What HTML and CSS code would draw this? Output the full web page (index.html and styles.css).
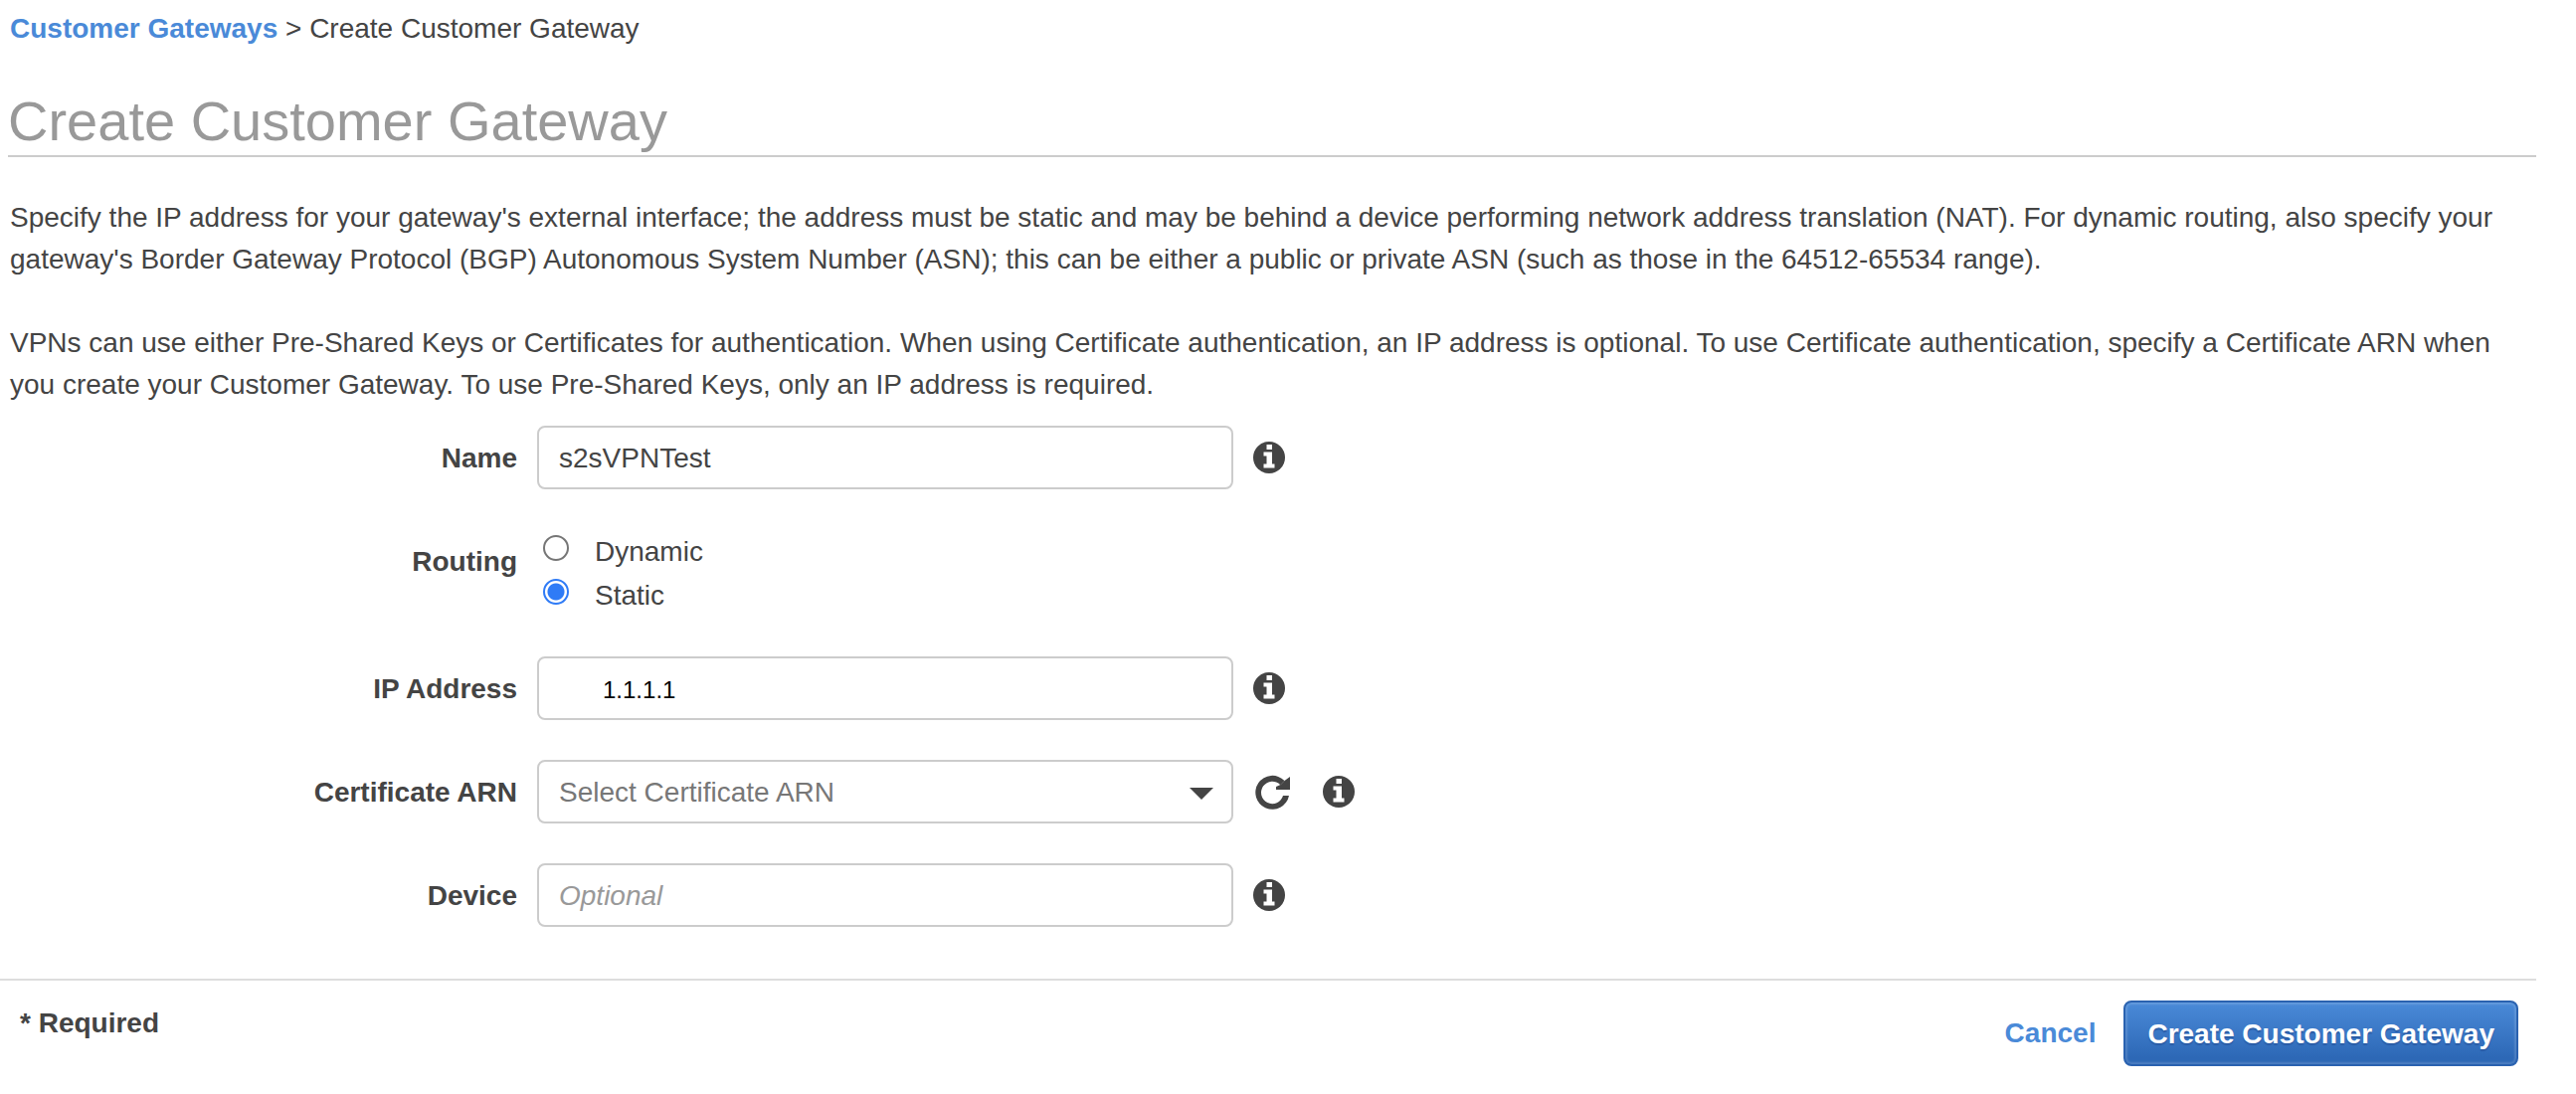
FILE: index.html
```html
<!DOCTYPE html>
<html lang="en">
<head>
  <meta charset="utf-8">
  <meta name="viewport" content="width=device-width, initial-scale=1">
  <title>Create Customer Gateway</title>
  <link rel="stylesheet" href="styles.css">
</head>
<body>
  <svg class="sprite" aria-hidden="true">
    <symbol id="icon-info" viewBox="0 0 32 32">
      <circle cx="16" cy="16" r="16" fill="#444"/>
      <path fill="#fff" d="M13.5 3h5.5v5h-5.500zM10.500 10.500h8.500V22.500h2.500v4h-11v-4h3V14.500h-3z"/>
    </symbol>
    <symbol id="icon-refresh" viewBox="0 0 38 36">
      <path fill="#444" d="M36 22A17 17 0 1 1 31.500 7L27.300 11.200A11.200 11.200 0 1 0 30 22z"/>
      <path fill="#444" d="M37 3v13H23v-3l4.500-2 4-4z"/>
    </symbol>
  </svg>

  <main class="page">
    <nav class="breadcrumb" aria-label="Breadcrumb">
      <a class="link" href="#gateways">Customer Gateways</a> &gt; <span>Create Customer Gateway</span>
    </nav>

    <h1 class="title">Create Customer Gateway</h1>

    <div class="intro">
      <p>Specify the IP address for your gateway's external interface; the address must be static and may be behind a device performing network address translation (NAT). For dynamic routing, also specify your gateway's Border Gateway Protocol (BGP) Autonomous System Number (ASN); this can be either a public or private ASN (such as those in the 64512-65534 range).</p>
      <p>VPNs can use either Pre-Shared Keys or Certificates for authentication. When using Certificate authentication, an IP address is optional. To use Certificate authentication, specify a Certificate ARN when you create your Customer Gateway. To use Pre-Shared Keys, only an IP address is required.</p>
    </div>

    <form class="form" id="gateway-form">
      <div class="row">
        <label class="label" for="name">Name</label>
        <input class="field" id="name" type="text" value="s2sVPNTest">
        <button class="icon-button" type="button" aria-label="Name info"><svg class="icon"><use href="#icon-info"/></svg></button>
      </div>

      <div class="row" role="radiogroup" aria-labelledby="routing-label">
        <span class="label" id="routing-label">Routing</span>
        <div class="options">
          <label class="option"><input class="radio" type="radio" name="routing" value="dynamic"> Dynamic</label>
          <label class="option"><input class="radio" type="radio" name="routing" value="static" checked> Static</label>
        </div>
      </div>

      <div class="row">
        <label class="label" for="ip">IP Address</label>
        <input class="field field-ip" id="ip" type="text" value="1.1.1.1">
        <button class="icon-button" type="button" aria-label="IP address info"><svg class="icon"><use href="#icon-info"/></svg></button>
      </div>

      <div class="row">
        <label class="label" for="arn">Certificate ARN</label>
        <div class="select-wrap">
          <select class="field field-select" id="arn">
            <option>Select Certificate ARN</option>
          </select>
          <svg class="caret" viewBox="0 0 24 12" aria-hidden="true"><path fill="#444" d="M0 0h24L12 12z"/></svg>
        </div>
        <button class="icon-button" type="button" aria-label="Refresh certificates"><svg class="icon icon-refresh"><use href="#icon-refresh"/></svg></button>
        <button class="icon-button icon-button-next" type="button" aria-label="Certificate ARN info"><svg class="icon"><use href="#icon-info"/></svg></button>
      </div>

      <div class="row">
        <label class="label" for="device">Device</label>
        <input class="field" id="device" type="text" placeholder="Optional">
        <button class="icon-button" type="button" aria-label="Device info"><svg class="icon"><use href="#icon-info"/></svg></button>
      </div>
    </form>
  </main>

  <footer class="footer">
    <span class="required">* Required</span>
    <div class="actions">
      <a class="link" href="#cancel">Cancel</a>
      <button class="submit" type="submit" form="gateway-form">Create Customer Gateway</button>
    </div>
  </footer>
</body>
</html>
```
FILE: styles.css
```css
* {
  box-sizing: border-box;
}

body {
  margin: 0;
  padding-right: 40px;
  background: #fff;
  color: #444;
  font-family: "Liberation Sans", Helvetica, Arial, sans-serif;
  font-size: 28px;
  line-height: 42px;
}

.sprite {
  display: none;
}

.page {
  padding: 8px 0 52px 8px;
}

.breadcrumb {
  padding-left: 2px;
}

.link {
  color: #4a8ad8;
  font-weight: bold;
  text-decoration: none;
}

.title {
  margin: 40px 0;
  padding-bottom: 2px;
  border-bottom: 2px solid #ccc;
  color: #999;
  font-size: 56px;
  font-weight: normal;
  line-height: 64px;
}

.intro {
  padding: 0 8px 0 2px;
}

.intro p {
  margin: 0;
}

.intro p + p {
  margin-top: 42px;
}

.form {
  display: flex;
  flex-direction: column;
  gap: 40px;
  margin-top: 20px;
}

.row {
  display: flex;
  align-items: flex-start;
}

.label {
  flex: none;
  width: 512px;
  height: 64px;
  margin-right: 20px;
  font-weight: bold;
  line-height: 66px;
  text-align: right;
}

.field {
  width: 700px;
  height: 64px;
  padding: 2px 20px 0;
  border: 2px solid #ccc;
  border-radius: 8px;
  background: #fff;
  color: #444;
  font: inherit;
}

.field::placeholder {
  color: #999;
  font-style: italic;
  opacity: 1;
}

.field-ip {
  padding-top: 4px;
  padding-left: 64px;
  color: #000;
  font-size: 24px;
}

.select-wrap {
  display: flex;
  position: relative;
}

.field-select {
  appearance: none;
  color: #777;
}

.caret {
  position: absolute;
  top: 28px;
  right: 20px;
  width: 24px;
  height: 12px;
  pointer-events: none;
}

.icon-button {
  display: flex;
  align-items: center;
  height: 64px;
  margin-left: 20px;
  padding: 0;
  border: 0;
  background: none;
}

.icon-button-next {
  margin-left: 32px;
}

.icon {
  width: 32px;
  height: 32px;
}

.icon-refresh {
  width: 38px;
  height: 36px;
}

.option {
  display: flex;
  align-items: flex-start;
  gap: 26px;
  height: 44px;
  padding-left: 6px;
  line-height: 46px;
}

.radio {
  appearance: none;
  width: 26px;
  height: 26px;
  margin: 6px 0 0;
  border: 2px solid #767676;
  border-radius: 50%;
  background: #fff;
}

.radio:checked {
  border-color: #2f7bf6;
  background: radial-gradient(circle, #2f7bf6 0 8px, #fff 9px);
}

.footer {
  display: flex;
  justify-content: space-between;
  align-items: flex-start;
  padding: 20px 18px 28px 20px;
  border-top: 2px solid #ddd;
}

.required {
  font-weight: bold;
  line-height: 46px;
}

.actions {
  display: flex;
  align-items: center;
  gap: 28px;
  line-height: 44px;
}

.submit {
  height: 66px;
  padding: 2px 22px 0;
  border: 2px solid #2a62b0;
  border-radius: 8px;
  background: linear-gradient(#4a8ad8, #2d68b6 90%);
  box-shadow: inset 0 0 2px 2px rgba(255, 255, 255, 0.15);
  color: #fff;
  font: inherit;
  font-weight: bold;
  text-shadow: 0 2px 1px #2a5ca6;
}
```
